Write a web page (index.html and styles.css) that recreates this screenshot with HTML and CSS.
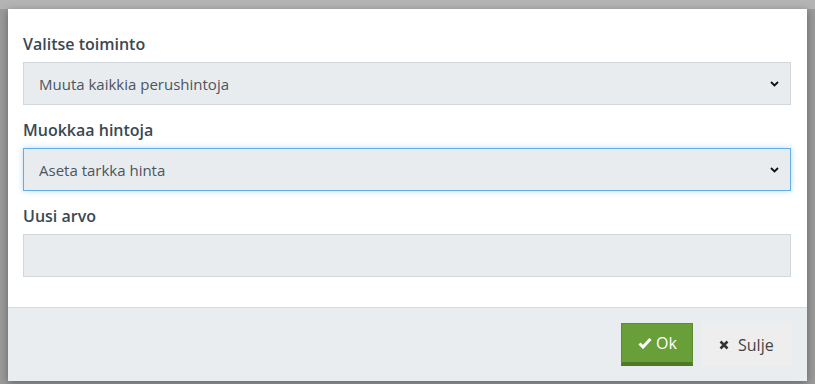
FILE: index.html
```html
<!DOCTYPE html>
<html lang="fi">
<head>
    <meta charset="UTF-8">
    <meta name="viewport" content="width=device-width, initial-scale=1.0">
    <title>Muokkaa hintoja</title>
    <link rel="stylesheet" href="styles.css">
</head>
<body>
    <div class="backdrop">
        <div class="modal">
            <div class="modal-body">
                <div class="field">
                    <label class="field-label">Valitse toiminto</label>
                    <div class="select-box">
                        <select class="control">
                            <option>Muuta kaikkia perushintoja</option>
                        </select>
                        <svg class="chevron" width="9" height="6" viewBox="0 0 9 6"><path d="M1 1 L4.5 4.5 L8 1" fill="none" stroke="#111" stroke-width="1.8"/></svg>
                    </div>
                </div>
                <div class="field">
                    <label class="field-label">Muokkaa hintoja</label>
                    <div class="select-box">
                        <select class="control focused">
                            <option>Aseta tarkka hinta</option>
                        </select>
                        <svg class="chevron" width="9" height="6" viewBox="0 0 9 6"><path d="M1 1 L4.5 4.5 L8 1" fill="none" stroke="#111" stroke-width="1.8"/></svg>
                    </div>
                </div>
                <div class="field">
                    <label class="field-label">Uusi arvo</label>
                    <input class="control" type="text">
                </div>
            </div>
            <div class="modal-footer">
                <button class="btn btn-ok">
                    <svg width="14" height="12" viewBox="0 0 14 12"><path d="M1.5 6.5 L5 10 L12.5 2" fill="none" stroke="#fff" stroke-width="3"/></svg>
                    Ok
                </button>
                <button class="btn btn-close">
                    <svg width="10" height="10" viewBox="0 0 10 10"><path d="M1.5 1.5 L8.5 8.5 M8.5 1.5 L1.5 8.5" fill="none" stroke="#333" stroke-width="2.6"/></svg>
                    Sulje
                </button>
            </div>
        </div>
    </div>
</body>
</html>
```

FILE: styles.css
```css
* {
    box-sizing: border-box;
}

body {
    margin: 0;
    background: #9a9a9a;
    font-family: 'Open Sans', 'Liberation Sans', sans-serif;
    color: #3b4650;
}

.backdrop {
    width: 815px;
    height: 384px;
    padding: 9px 8px 0 8px;
    background: linear-gradient(#b4b4b4 0, #b4b4b4 9px, #9a9a9a 9px);
}

.modal {
    width: 799px;
    background: #fff;
    box-shadow: 0 2px 8px rgba(0, 0, 0, 0.35);
}

.modal-body {
    padding: 25px 16px 30px 15px;
}

.field + .field {
    margin-top: 15px;
}

.field-label {
    display: block;
    font-size: 16px;
    line-height: 20px;
    font-weight: 600;
    color: #3a4853;
    margin-bottom: 8px;
}

.select-box {
    position: relative;
}

.control {
    display: block;
    width: 100%;
    height: 43px;
    margin: 0;
    padding: 0 15px;
    appearance: none;
    background: #e9ecef;
    border: 1px solid #d2d7db;
    border-radius: 0;
    font-family: inherit;
    font-size: 15px;
    color: #4a5560;
    outline: none;
}

.control.focused {
    border-color: #62aeea;
    box-shadow: 0 0 6px rgba(98, 174, 234, 0.45);
}

.chevron {
    position: absolute;
    right: 12px;
    top: 19px;
}

.modal-footer {
    display: flex;
    justify-content: flex-end;
    gap: 9px;
    padding: 15px 15px 15px 15px;
    background: #e9edf0;
    border-top: 1px solid #d3dcdf;
}

.btn {
    display: flex;
    align-items: center;
    gap: 4px;
    height: 43px;
    border: none;
    font-family: inherit;
    font-size: 16px;
    cursor: pointer;
}

.btn-ok {
    width: 72px;
    padding: 0 0 0 16px;
    background: #689f38;
    border: 1px solid #5b8c30;
    border-bottom: 4px solid #4d7a29;
    color: #fff;
}

.btn-close {
    width: 90px;
    padding: 0 0 0 17px;
    gap: 9px;
    background: #eeeeee;
    color: #444;
}
```
